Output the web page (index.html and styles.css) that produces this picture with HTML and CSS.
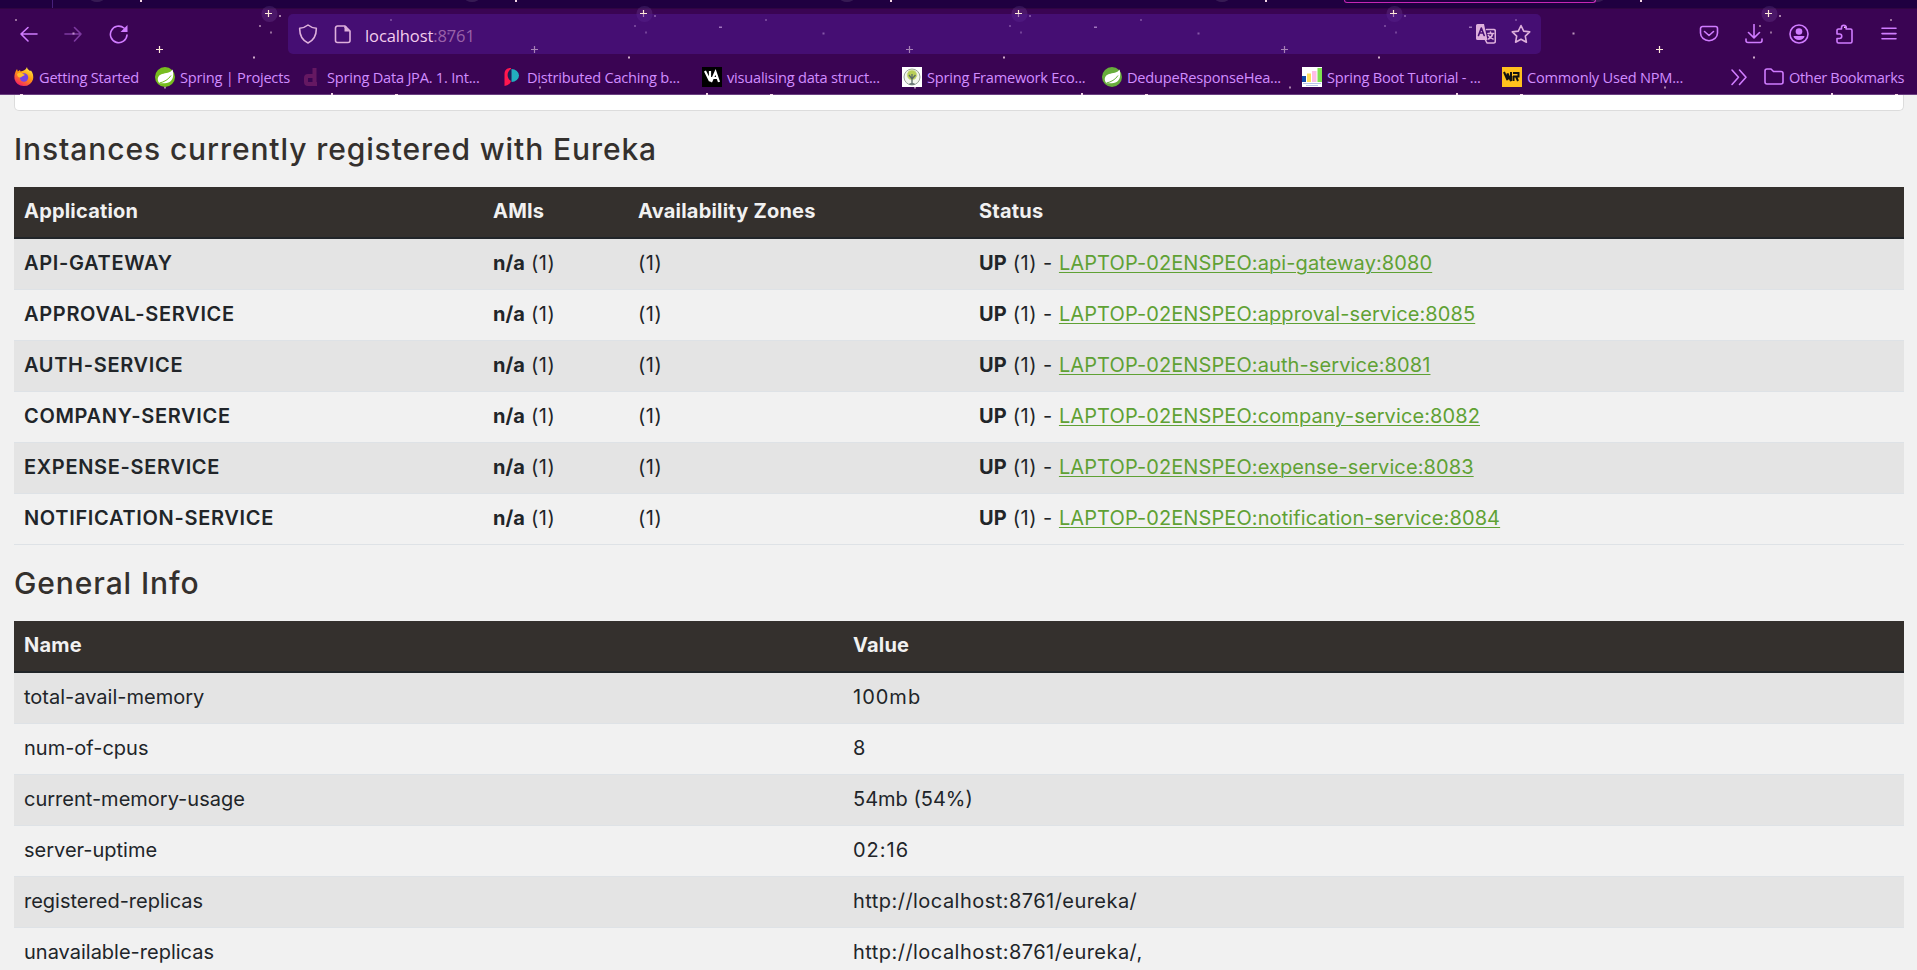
FILE: index.html
```html
<!DOCTYPE html>
<html lang="en">
<head>
<meta charset="utf-8">
<title>Eureka</title>
<link rel="stylesheet" href="styles.css">
</head>
<body>
<header class="browser">
  <svg class="stars" width="1917" height="95" aria-hidden="true">
    <defs>
      <pattern id="sky" width="375" height="95" patternUnits="userSpaceOnUse">
        <ellipse cx="97" cy="-2" rx="7" ry="4" fill="#fff" opacity=".1"/>
        <circle cx="269.5" cy="14" r="8" fill="#c9a0ff" opacity=".12"/>
        <path d="M265 13.5h7M268.500 10v7M156 49.500h7M159.500 46v7" stroke="#ffe9d8" stroke-width="1.200"/>
        <g fill="#f3d5e6">
          <rect x="140" y="0" width="2" height="2"/><rect x="279" y="15" width="2" height="2" opacity=".6"/>
          <rect x="259" y="25" width="2" height="2" opacity=".5"/><rect x="270" y="31.500" width="2" height="2" opacity=".5"/>
          <rect x="253" y="56.500" width="2" height="2" opacity=".8"/><rect x="15" y="19" width="2" height="2" opacity=".5"/>
          <rect x="344" y="26.500" width="3" height="1.500"/><rect x="72.500" y="32.500" width="2" height="2" opacity=".7"/>
          <rect x="164" y="86.500" width="2" height="2" opacity=".6"/><rect x="331" y="93" width="2" height="2"/>
          <rect x="20" y="94" width="3" height="1"/>
        </g>
      </pattern>
    </defs>
    <rect width="1917" height="95" fill="url(#sky)"/>
  </svg>
  <div class="tabstrip"><i class="divider"></i><i class="active-tab"></i></div>
  <div class="toolbar">
    <div class="nav">
      <svg width="20" height="20" viewBox="0 0 20 20"><path d="M18 10H2M9 3.500L2 10l7 7"/></svg>
      <svg class="dim" width="20" height="20" viewBox="0 0 20 20"><path d="M1 10h16M10.500 3.500L17 10l-6.500 7"/></svg>
      <svg width="20" height="20" viewBox="0 0 20 20"><path d="M18 11a8.300 8.300 0 1 1-3-7"/><path class="solid" d="M18.500 1v7h-7z"/></svg>
    </div>
    <div class="urlbar">
      <svg width="20" height="20" viewBox="0 0 20 20"><path d="M10 1c2.500 2 5 3 8.300 3.300C18.500 11 16.500 16 10 19 3.500 16 1.500 11 1.700 4.300 5 4 7.500 3 10 1z"/></svg>
      <svg class="page" width="20" height="20" viewBox="0 0 20 20"><path d="M4.500 2H12l5 5v9.500a2 2 0 0 1-2 2H4.500a2 2 0 0 1-2-2V4a2 2 0 0 1 2-2z"/><path class="solid" d="M11.500 2v5.500H17z"/></svg>
      <span class="url">localhost<span class="port">:8761</span></span>
      <svg class="translate" width="20" height="20" viewBox="0 0 20 20"><path class="solid" d="M1.500 0H8l3.500 16H1.500A1.500 1.500 0 0 1 0 14.500v-13A1.500 1.500 0 0 1 1.500 0z"/><path class="cut" d="M2.500 11.500L5.300 4l2.900 7.500M3.500 9h3.700"/><path d="M10.500 5.500h7.300a1.500 1.500 0 0 1 1.500 1.500v10.500a1.500 1.500 0 0 1-1.500 1.500H11l-1.500-3M12 9.500h5.500M14.500 8v1.500M16.500 10c-.5 2.500-2 4-4 5M12.500 11.500c1 2 2.500 3 4.500 3.500"/></svg>
      <svg width="20" height="20" viewBox="0 0 20 20"><path d="M10 1.500l2.700 5.600 6 .8-4.400 4.200 1.100 6.100L10 15.300l-5.400 2.900 1.100-6.100-4.400-4.200 6-.8z"/></svg>
    </div>
    <div class="tools">
      <svg width="20" height="20" viewBox="0 0 20 20"><path d="M3.500 2.500h13a2 2 0 0 1 2 2V9a8.500 7.700 0 0 1-17 0V4.500a2 2 0 0 1 2-2zM5.500 7.500L10 11.500l4.500-4"/></svg>
      <svg width="20" height="20" viewBox="0 0 20 20"><path d="M10 .5v13M4.500 8.500l5.500 5.300 5.500-5.300M2 15v1.500a2 2 0 0 0 2 2h12a2 2 0 0 0 2-2V15"/></svg>
      <svg width="20" height="20" viewBox="0 0 20 20"><circle cx="10" cy="10" r="9"/><circle class="solid" cx="10" cy="7.500" r="3.300"/><path class="solid" d="M4.500 12h11a5.500 4 0 0 1-11 0z"/></svg>
      <svg width="20" height="20" viewBox="0 0 20 20"><path d="M7.500 5V3.500a2.300 2.300 0 0 1 4.600 0V5h4.400A1.500 1.500 0 0 1 18 6.500v11a1.500 1.500 0 0 1-1.500 1.500H4.500A1.500 1.500 0 0 1 3 17.500v-3h2.500a2.200 2.200 0 0 0 0-4.500H3V6.500A1.500 1.500 0 0 1 4.500 5z"/></svg>
      <svg width="20" height="20" viewBox="0 0 20 20"><path d="M3 4h14M3 9.300h14M3 14.500h14" transform="translate(0 .3)"/></svg>
    </div>
  </div>
  <nav class="bookmarks">
    <a><svg width="20" height="20" viewBox="0 0 20 20"><defs><linearGradient id="fx" x1=".8" y1="0" x2=".2" y2="1"><stop offset="0" stop-color="#fff04a"/><stop offset=".45" stop-color="#ff980e"/><stop offset="1" stop-color="#f5156c"/></linearGradient></defs><path fill="url(#fx)" d="M13 0c0 2 1.500 2.500 3 4l1-.5c2 2.500 2.800 6 2 9A9.700 9.700 0 0 1 .5 12C0 8 1 5 3 2l.8 2.500L6 3l.5 1.500C9 4 12 3 13 0z"/><circle cx="10" cy="10.500" r="4.200" fill="#7542e5"/><path fill="#ffbd2e" d="M3 7c2-1.500 4-1.500 5.500-.5L11 8l-3 1.500C7 11 5 11 3.500 9z"/></svg>Getting Started</a>
    <a><svg width="20" height="20" viewBox="0 0 20 20"><circle cx="10" cy="10" r="10" fill="#77bc1f"/><path fill="#fff" d="M17.500 2.500c1.500 5 .8 10-2.500 12.200-3 2-7 1.500-10.500 1.500C1.500 13 2.500 8.500 7 7c4-1.200 8-.5 10.500-4.500z"/><path d="M4.500 16C9 15 13.500 12.500 16 8.500" fill="none" stroke="#77bc1f"/></svg>Spring | Projects</a>
    <a><svg width="20" height="20" viewBox="0 0 20 20"><path d="M12.500 1v18M11.500 9H6a2 2 0 0 0-2 2v4a2 2 0 0 0 2 2h9" fill="none" stroke="#651862" stroke-width="4"/></svg>Spring Data JPA. 1. Int...</a>
    <a><svg width="20" height="20" viewBox="0 0 20 20"><path fill="#ff174f" d="M9 1v13c-1 3-3 4.500-6.500 5V7C2.500 3 5 1 9 1z"/><path fill="#22aebf" d="M9.500 2a7.500 6.500 0 0 1 0 13z"/><path fill="#182159" d="M9 2v12c-4-2-5-9 0-12z"/></svg>Distributed Caching b...</a>
    <a><svg width="20" height="20" viewBox="0 0 20 20"><path d="M0 0h20v20H0z"/><path d="M3 4l5 10V4M9 15l4.500-10L17 15M8 11h8" fill="none" stroke="#fff" stroke-width="2.200"/></svg>visualising data struct...</a>
    <a><svg width="20" height="20" viewBox="0 0 20 20"><path fill="#fff" d="M0 0h20v20H0z"/><circle cx="10" cy="10" r="8" fill="#f3f6ed" stroke="#9aa39a"/><circle cx="10" cy="8" r="4.800" fill="#b9cf57" stroke="#ccd98a" stroke-dasharray="2 1"/><path d="M10 7v10M7 8l3 4 3.500-4M7.500 17h5" fill="none" stroke="#5b6a68" stroke-width="1.300"/></svg>Spring Framework Eco...</a>
    <a><svg width="20" height="20" viewBox="0 0 20 20"><circle cx="10" cy="10" r="10" fill="#68ad3c"/><path fill="#fff" d="M17.500 2.500c1.500 5 .8 10-2.500 12.200-3 2-7 1.500-10.500 1.500C1.500 13 2.500 8.500 7 7c4-1.200 8-.5 10.500-4.500z"/><path d="M4.500 16C9 15 13.500 12.500 16 8.500" fill="none" stroke="#68ad3c"/></svg>DedupeResponseHea...</a>
    <a><svg width="20" height="20" viewBox="0 0 20 20"><path fill="#fff" d="M0 0h20v20H0z"/><path fill="#1148a8" d="M0 9h4v6H0z"/><path fill="#ffdf5d" d="M5 6.500h4V15H5z"/><path fill="#ffbde5" d="M10 4h4.500v11H10z"/><path fill="#7ee050" d="M15.500 1H20v14h-4.500z"/><path fill="#b9c4ea" d="M1 16h18v1H1zM4 18h12v1H4z"/></svg>Spring Boot Tutorial - ...</a>
    <a><svg width="20" height="20" viewBox="0 0 20 20"><path fill="#ffc01e" d="M0 0h20v20H0z"/><path d="M2 5l3.500 8V6.500L9 14V5M11 6h5.500v3.500H11M11.500 9v5M14 9.500l2 4.500" fill="none" stroke="#111" stroke-width="2"/></svg>Commonly Used NPM...</a>
    <svg class="line more" width="18" height="20" viewBox="0 0 18 20"><path d="M2 3l6.500 7.200L2 17.500M9.500 3l6.500 7.200-6.500 7.300"/></svg>
    <a class="other"><svg class="line" width="20" height="20" viewBox="0 0 20 20"><path d="M3 2h4l2.500 2.500H17a2 2 0 0 1 2 2v8.500a2 2 0 0 1-2 2H3a2 2 0 0 1-2-2V4a2 2 0 0 1 2-2z"/></svg>Other Bookmarks</a>
  </nav>
</header>
<main>
  <div class="card"></div>
  <h1>Instances currently registered with Eureka</h1>
  <table class="instances">
    <colgroup><col class="c-app"><col class="c-ami"><col class="c-zone"><col></colgroup>
    <thead><tr><th>Application</th><th>AMIs</th><th>Availability Zones</th><th>Status</th></tr></thead>
    <tbody>
      <tr><td><b>API-GATEWAY</b></td><td><strong>n/a</strong> (1)</td><td>(1)</td><td><strong>UP</strong> (1) - <a>LAPTOP-02ENSPEO:api-gateway:8080</a></td></tr>
      <tr><td><b>APPROVAL-SERVICE</b></td><td><strong>n/a</strong> (1)</td><td>(1)</td><td><strong>UP</strong> (1) - <a>LAPTOP-02ENSPEO:approval-service:8085</a></td></tr>
      <tr><td><b>AUTH-SERVICE</b></td><td><strong>n/a</strong> (1)</td><td>(1)</td><td><strong>UP</strong> (1) - <a>LAPTOP-02ENSPEO:auth-service:8081</a></td></tr>
      <tr><td><b>COMPANY-SERVICE</b></td><td><strong>n/a</strong> (1)</td><td>(1)</td><td><strong>UP</strong> (1) - <a>LAPTOP-02ENSPEO:company-service:8082</a></td></tr>
      <tr><td><b>EXPENSE-SERVICE</b></td><td><strong>n/a</strong> (1)</td><td>(1)</td><td><strong>UP</strong> (1) - <a>LAPTOP-02ENSPEO:expense-service:8083</a></td></tr>
      <tr><td><b>NOTIFICATION-SERVICE</b></td><td><strong>n/a</strong> (1)</td><td>(1)</td><td><strong>UP</strong> (1) - <a>LAPTOP-02ENSPEO:notification-service:8084</a></td></tr>
    </tbody>
  </table>
  <h1>General Info</h1>
  <table class="info">
    <colgroup><col class="c-name"><col></colgroup>
    <thead><tr><th>Name</th><th>Value</th></tr></thead>
    <tbody>
      <tr><td>total-avail-memory</td><td class="wide">100mb</td></tr>
      <tr><td>num-of-cpus</td><td>8</td></tr>
      <tr><td>current-memory-usage</td><td>54mb (54%)</td></tr>
      <tr><td>server-uptime</td><td class="wide">02:16</td></tr>
      <tr><td>registered-replicas</td><td class="loose">http://localhost:8761/eureka/</td></tr>
      <tr><td>unavailable-replicas</td><td class="loose">http://localhost:8761/eureka/,</td></tr>
    </tbody>
  </table>
</main>
</body>
</html>
```
FILE: styles.css
```css
* { box-sizing: border-box; }
body {
  margin: 0;
  height: 970px;
  overflow: hidden;
  background: #f1f1f1;
  color: #212529;
  font: 20px/30px Inter, "Open Sans", sans-serif;
}

/* Browser chrome */
.browser {
  position: relative;
  height: 95px;
  background: #3a0453;
  border-bottom: 1px solid #6a3f80;
  font-family: "Open Sans", "Noto Sans", sans-serif;
}
.stars { position: absolute; left: 0; top: 0; pointer-events: none; }
.tabstrip { display: flex; height: 9px; background: #1f0040; border-bottom: 1px solid #300541; }
.divider { width: 1px; height: 8px; margin-left: 52px; background: #47207a; }
.active-tab {
  width: 252px; height: 3px; margin-left: 1291px;
  border: 1px solid #c626b5; border-top: 0; border-radius: 0 0 5px 5px;
}
.toolbar, .bookmarks { position: relative; }
.toolbar { display: flex; align-items: center; height: 50px; }
.toolbar svg, .line {
  fill: none; stroke: #d07cff; stroke-width: 1.6;
  stroke-linecap: round; stroke-linejoin: round; flex: none;
}
.toolbar .solid { fill: #d07cff; stroke: none; }
.nav { display: flex; gap: 25px; width: 288px; padding-left: 19px; }
.nav .dim { opacity: .45; }
.urlbar {
  display: flex; align-items: center;
  width: 1253px; height: 40px; padding: 0 10px;
  background: rgba(80, 23, 148, .5); border-radius: 5px;
}
.toolbar .urlbar svg { stroke: #deb0dc; }
.toolbar .urlbar .solid { fill: #deb0dc; stroke: none; }
.toolbar .urlbar .cut { stroke: #450d73; stroke-width: 1.6; }
.page { margin-left: 15px; }
.url { flex: 1; padding: 3px 0 0 12px; color: #f3cdec; font-size: 16.5px; letter-spacing: -.1px; line-height: 24px; }
.port { color: #9a62a9; }
.translate { margin-right: 15px; }
.tools { display: flex; gap: 25px; margin-left: 158px; }

.bookmarks {
  display: grid;
  grid-template-columns: 141px 147px repeat(6, 200px) 228px 34px auto;
  align-items: center;
  height: 35px;
  padding-left: 14px;
  color: #d18dff;
  font-size: 14.6px;
  letter-spacing: -.22px;
  line-height: 20px;
}
.bookmarks a { display: flex; align-items: center; gap: 5px; white-space: nowrap; }
.bookmarks svg { flex: none; }
.other { letter-spacing: -.35px; }

/* Page */
main { padding: 0 13px 0 14px; }
.card { height: 16px; background: #fff; border: 1px solid #dcdcdc; border-top: 0; border-radius: 0 0 5px 5px; }
h1 { margin: 20px 0; height: 36px; color: #34302d; font-size: 30px; line-height: 36px; font-weight: 450; letter-spacing: .9px; }
table { width: 1890px; border-collapse: separate; border-spacing: 0; table-layout: fixed; }
th { height: 52px; padding: 0 10px 2px; border-bottom: 2px solid #212529; background: #34302d; color: #f1f1f1; text-align: left; font-weight: 700; letter-spacing: .2px; }
td { height: 51px; padding: 0 10px 2px; border-bottom: 1px solid #dee2e6; }
.instances td { letter-spacing: .5px; }
tbody tr:nth-child(odd) td { background: #e4e4e4; }
td b { font-weight: 600; letter-spacing: .68px; }
td strong { font-weight: 700; letter-spacing: 0; }
td a { color: #5fa134; text-decoration: underline; text-decoration-thickness: 1px; text-underline-offset: 2px; letter-spacing: .1px; }
.c-app { width: 469px; }
.c-ami { width: 145px; }
.c-zone { width: 341px; }
.c-name { width: 829px; }
.info .wide { letter-spacing: 1px; }
.info .loose { letter-spacing: .46px; }
.info td:nth-child(2) { word-spacing: 0; }
```
